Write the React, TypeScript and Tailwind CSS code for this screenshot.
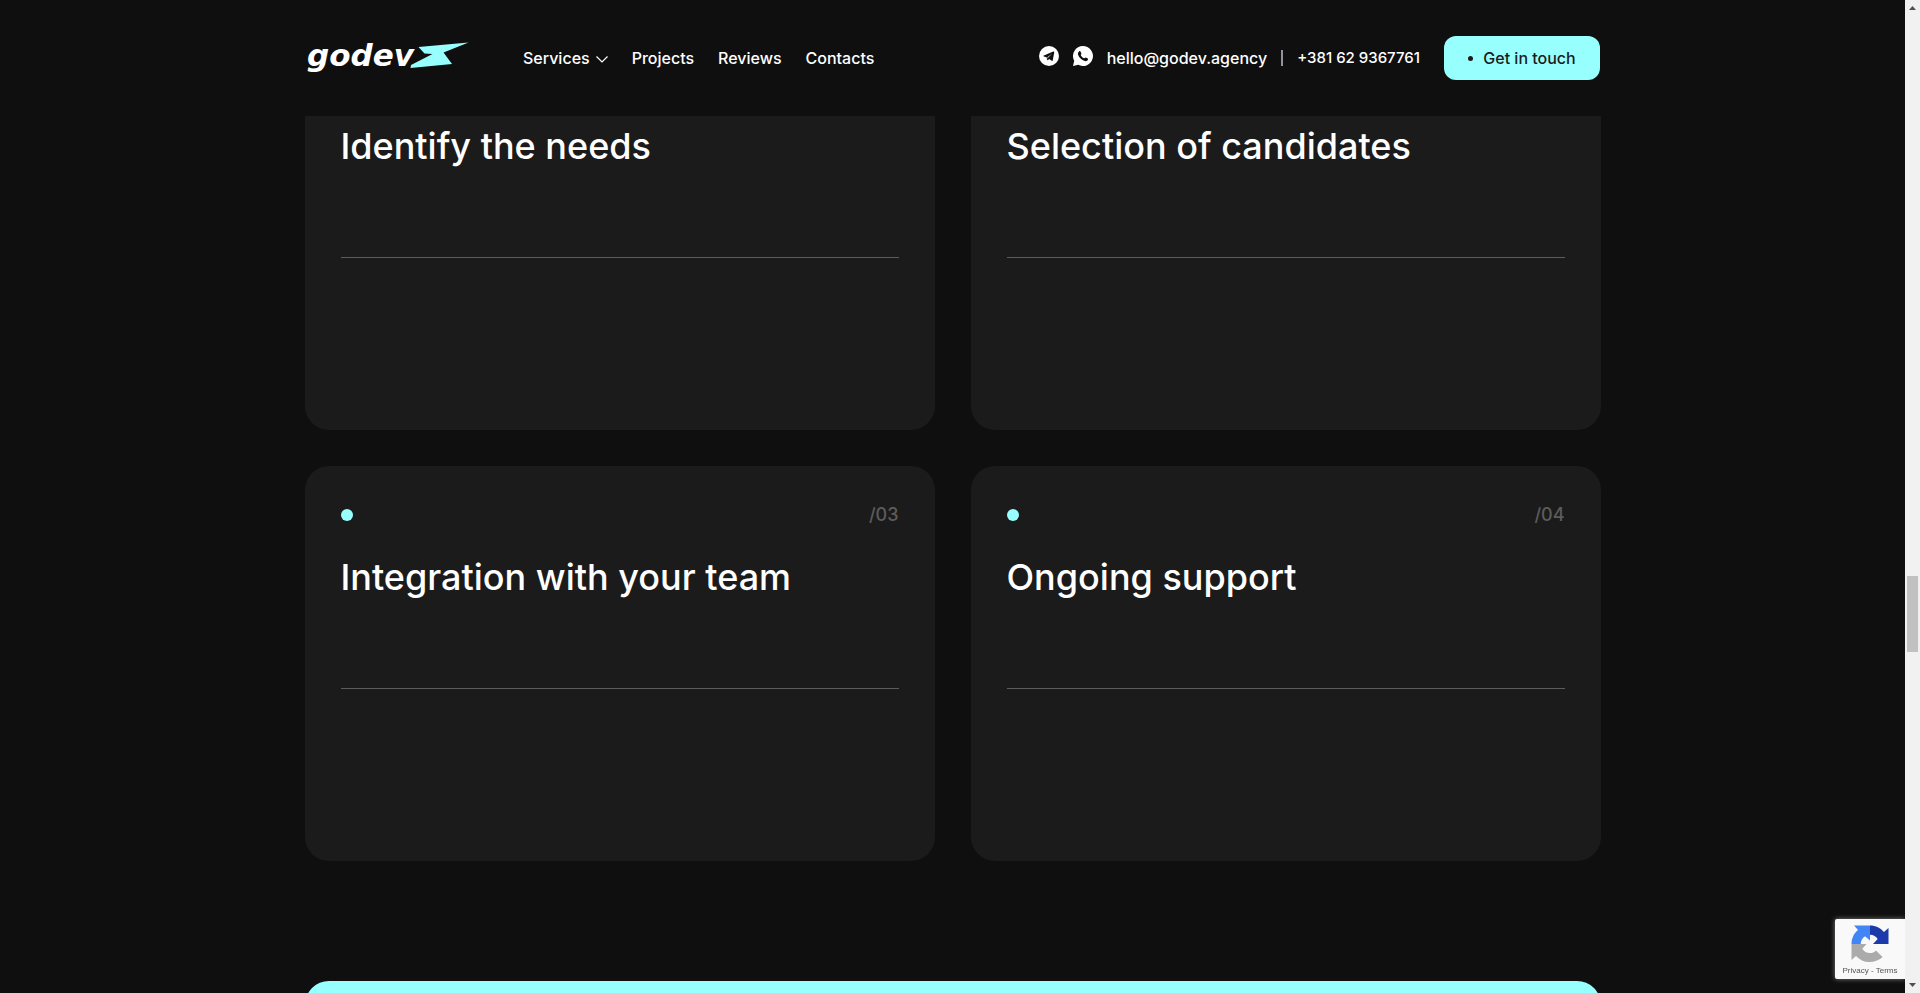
import React from "react";

const navItems = ["Projects", "Reviews", "Contacts"];

const steps = [
  { number: "/01", title: "Identify the needs" },
  { number: "/02", title: "Selection of candidates" },
  { number: "/03", title: "Integration with your team" },
  { number: "/04", title: "Ongoing support" },
];

function Logo() {
  return (
    <a href="#home" aria-label="godev" className="block">
      <svg width="164" height="40" viewBox="0 0 164 40" aria-hidden="true">
        <text
          x="2"
          y="28"
          fill="#fff"
          className="font-['DejaVu_Sans',sans-serif] text-[31px] font-bold italic"
        >
          godev
        </text>
        <path
          fill="#98ffff"
          d="M113.500 9 163.500 4.500 138.500 14.500 147 26 105.500 30 106 27 127.500 16 119.500 15.500Z"
        />
      </svg>
    </a>
  );
}

function TelegramIcon() {
  return (
    <svg width="20" height="20" viewBox="0 0 20 20" aria-hidden="true">
      <circle cx="10" cy="10" r="10" fill="#fff" />
      <path
        fill="#0f0f0f"
        d="M4.300 9.700 14.300 5.600c.6-.2 1 .1.900.8l-1.500 8c-.1.600-.5.700-1 .4l-2.500-1.900-1.200 1.200c-.3.300-.6.200-.7-.2l-.8-2.700-2.600-.8c-.7-.2-.7-.5-.6-.7Zm4.100 1.500.3 1.600.5-1.400 4-3.900-4.800 3.700Z"
      />
    </svg>
  );
}

function WhatsAppIcon() {
  return (
    <svg width="20" height="20" viewBox="0 0 20 20" aria-hidden="true">
      <path fill="#fff" d="M10 0a10 10 0 1 1-4.800 18.800L0 20l1.200-5.200A10 10 0 0 1 10 0Z" />
      <path
        fill="#0f0f0f"
        d="M6.300 5.300c.3-.3.900-.3 1.100.1l1 2c.2.500-.7 1.100-.7 1.600.7 1.500 1.800 2.700 3.300 3.300.6.100 1.100-1.100 1.700-.9l2.100 1.100c.5.300.1 1.400-.4 1.900-.7.700-1.700.9-2.600.7-3.200-.9-5.800-3.400-6.800-6.500-.2-1.100.2-2.500 1.300-3.300Z"
      />
    </svg>
  );
}

function Header() {
  return (
    <header className="fixed inset-x-0 top-0 z-10 bg-[#0f0f0f] pr-[15px]">
      <div className="mx-auto flex h-[116px] max-w-[1295px] items-center justify-between text-base font-medium text-white">
        <div className="flex items-center gap-[54px]">
          <Logo />
          <nav className="flex items-center gap-6">
            <a href="#services" className="flex items-center gap-1.5">
              Services
              <svg width="12" height="8" viewBox="0 0 12 8" fill="none" stroke="#fff" strokeWidth="1.200" className="translate-y-px" aria-hidden="true">
                <path d="m.5 1.500 5.500 5.500 5.500-5.500" />
              </svg>
            </a>
            {navItems.map((item) => (
              <a key={item} href={`#${item.toLowerCase()}`}>
                {item}
              </a>
            ))}
          </nav>
        </div>
        <div className="flex items-center gap-6">
          <div className="flex items-center gap-3.5">
            <a href="#telegram" aria-label="Telegram" className="pb-1">
              <TelegramIcon />
            </a>
            <a href="#whatsapp" aria-label="WhatsApp" className="pb-1">
              <WhatsAppIcon />
            </a>
            <a href="mailto:hello@godev.agency">hello@godev.agency</a>
            <span className="h-4 w-0.5 bg-[#9292a0]" />
            <a href="tel:+381629367761" className="text-[15px]">
              +381 62 9367761
            </a>
          </div>
          <button
            type="button"
            className="flex h-11 w-[156px] items-center justify-center gap-2.5 rounded-xl bg-[#98ffff] text-[#1b1b1b]"
          >
            <span className="size-[5px] rounded-full bg-[#1b1b1b]" />
            Get in touch
          </button>
        </div>
      </div>
    </header>
  );
}

function StepCard({ number, title }: { number: string; title: string }) {
  return (
    <article className="rounded-3xl bg-[#1b1b1b] p-9">
      <div className="flex h-[26px] items-center justify-between">
        <span className="size-3 rounded-full bg-[#98ffff]" />
        <span className="text-lg font-medium text-[#5c5c5c]">{number}</span>
      </div>
      <h3 className="mt-[25px] min-h-[136px] border-b border-[#5c5c5c] text-4xl leading-[48px] font-medium text-white">
        {title}
      </h3>
      <div className="h-[136px]" />
    </article>
  );
}

function RecaptchaBadge() {
  return (
    <aside className="fixed right-[15px] bottom-3.5 z-10 flex h-[60px] w-[70px] flex-col items-center rounded-l-xs bg-[#f9f9f9] pt-1.5 shadow-[0_0_5px_gray]">
      <svg width="38" height="38" viewBox="0 0 38 38" aria-hidden="true">
        <path
          fill="#1c3aa9"
          d="M19 .5c5.700 0 10.700 2.500 14 6.600L37.500 3v16H22l4.700-5c-1.600-2.500-4.200-4.300-7.700-4.300Z"
        />
        <path
          fill="#4285f4"
          d="M19 .5v15l-5-4.300c-2.600 1.600-4.300 4.500-4.300 7.800H.5C.5 13.300 3 8.300 7 5L3 .5Z"
        />
        <path
          fill="#ababab"
          d="M.5 19h15l-4.200 4.700c1.600 2.600 4.400 4.400 7.700 4.400 2.500 0 4.300-.8 5.900-2.600l6.700 6.400A18.500 18.500 0 0 1 5 31L.5 35Z"
        />
      </svg>
      <p className="mt-0.5 font-['Liberation_Sans',sans-serif] text-[8px] leading-3 whitespace-nowrap text-[#555]">
        <a href="#privacy">Privacy</a> - <a href="#terms">Terms</a>
      </p>
    </aside>
  );
}

function Scrollbar() {
  return (
    <div aria-hidden="true" className="fixed inset-y-0 right-0 z-20 flex w-[15px] flex-col items-center bg-[#f1f1f1]">
      <svg width="15" height="15" viewBox="0 0 15 15" fill="#505050">
        <path d="M4 10h7L7.500 6Z" />
      </svg>
      <div className="flex w-full flex-1 flex-col items-center">
        <div className="grow-[561]" />
        <div className="h-[76px] w-[11px] bg-[#c1c1c1]" />
        <div className="grow-[326]" />
      </div>
      <svg width="15" height="15" viewBox="0 0 15 15" fill="#505050">
        <path d="M4 5h7L7.500 9Z" />
      </svg>
    </div>
  );
}

export default function App() {
  return (
    <div className="h-screen overflow-hidden bg-[#0f0f0f] pr-[15px] font-['Inter',sans-serif]">
      <Header />
      <main className="mx-auto max-w-[1296px] pt-[35px]">
        <section className="grid grid-cols-2 gap-9">
          {steps.map((step) => (
            <StepCard key={step.number} {...step} />
          ))}
        </section>
        <section className="mt-[120px] h-[400px] rounded-3xl bg-[#98ffff]" />
      </main>
      <RecaptchaBadge />
      <Scrollbar />
    </div>
  );
}
